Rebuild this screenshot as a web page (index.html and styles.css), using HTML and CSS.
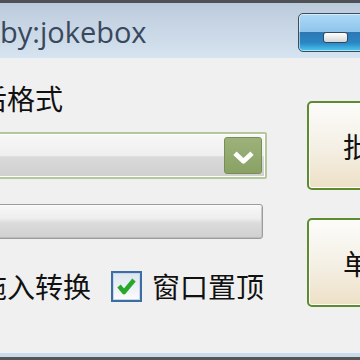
FILE: index.html
```html
<!DOCTYPE html>
<html lang="zh-CN">
<head>
  <meta charset="UTF-8" />
  <meta name="viewport" content="width=device-width, initial-scale=1.0" />
  <title>MP3转换 by:jokebox</title>
  <link rel="stylesheet" href="styles.css">
</head>
<body>
  <div class="window">
    <header class="titlebar">
      <span class="title">by:jokebox</span>
      <div class="min-btn"><span class="min-dash"></span></div>
    </header>

    <main class="client">
      <div class="left">
        <div class="label">后格式</div>
        <div class="combo">
          <div class="combo-btn">
            <svg width="38" height="37" viewBox="0 0 38 37">
              <polyline points="10.5,15 19.5,23.5 28.5,15" fill="none" stroke="#ffffff" stroke-width="5" stroke-linejoin="round" />
            </svg>
          </div>
        </div>
        <div class="progress"></div>
        <div class="options">
          <span class="opt-text">拖入转换</span>
          <span class="checkbox">
            <svg width="27" height="27" viewBox="0 0 27 27">
              <polyline points="6,13 11,19 21,7" fill="none" stroke="#27a82a" stroke-width="4.5" stroke-linejoin="round" />
            </svg>
          </span>
          <span class="opt-text">窗口置顶</span>
        </div>
      </div>

      <div class="right">
        <button class="action">批量</button>
        <button class="action">单个</button>
      </div>
    </main>

    <div class="frame-bottom"></div>
  </div>
</body>
</html>
```

FILE: styles.css
```css
* {
  margin: 0;
  padding: 0;
  box-sizing: border-box;
}

html, body {
  width: 360px;
  height: 360px;
  overflow: hidden;
}

body {
  font-family: "Noto Sans CJK SC", "Noto Sans", sans-serif;
  color: #111111;
}

.window {
  width: 360px;
  height: 360px;
  display: flex;
  flex-direction: column;
  overflow: hidden;
  background: #f0f0f0;
}

.titlebar {
  height: 58px;
  flex-shrink: 0;
  border-top: 3px solid #4e5256;
  background: linear-gradient(#bccbdc, #d6e3f0);
  display: flex;
  align-items: flex-start;
}

.title {
  font-family: "Open Sans", "DejaVu Sans", sans-serif;
  font-size: 29px;
  line-height: 38px;
  margin-top: 10px;
  color: #39485d;
  white-space: nowrap;
}

.min-btn {
  margin-left: auto;
  margin-right: -12px;
  margin-top: 10px;
  width: 74px;
  height: 39px;
  flex-shrink: 0;
  border: 1px solid #3e4c5c;
  border-radius: 5px;
  box-shadow: inset 0 0 0 1px rgba(255, 255, 255, 0.5);
  background: linear-gradient(#acd8f6 0%, #8fc5ec 48%, #2c78b4 50%, #2a86c4 78%, #4ccaf2 100%);
  padding: 18px 0 0 24px;
}

.min-dash {
  display: block;
  width: 25px;
  height: 11px;
  border: 1.5px solid #37465a;
  border-radius: 3px;
  background: linear-gradient(#ffffff, #d4d6d8);
}

.client {
  flex: 1;
  display: flex;
  align-items: flex-start;
}

.left {
  margin-left: -21px;
  width: 288px;
  flex-shrink: 0;
  padding-top: 25px;
}

.label {
  font-size: 28px;
  line-height: 30px;
  white-space: nowrap;
}

.combo {
  margin-top: 19px;
  height: 47px;
  border: 2px solid #b3c99b;
  border-radius: 2px;
  box-shadow: inset 0 0 0 1px #ffffff;
  background: linear-gradient(#f7f7f7 0%, #efefef 50%, #dadada 53%, #cfcfcf 100%);
  display: flex;
  justify-content: flex-end;
  align-items: center;
  padding-right: 3px;
}

.combo-btn {
  width: 38px;
  height: 37px;
  border: 1px solid #778f55;
  border-radius: 3px;
  background: linear-gradient(#9cb27a, #8aa165);
  display: flex;
}

.progress {
  margin-top: 25px;
  margin-right: 4px;
  height: 35px;
  border: 1px solid #9c9c9c;
  border-radius: 3px;
  box-shadow: inset 0 1px 0 #fbfbfb, inset 0 -1px 0 #bdbdbd, inset 1px 0 0 #e8e8e8, inset -1px 0 0 #c8c8c8;
  background: linear-gradient(#f8f8f8 0%, #eeeeee 40%, #dbdbdb 55%, #d0d0d0 100%);
}

.options {
  margin-top: 32px;
  height: 31px;
  display: flex;
  align-items: center;
}

.opt-text {
  font-size: 28px;
  line-height: 31px;
  white-space: nowrap;
}

.checkbox {
  margin: 0 10px 0 20px;
  width: 31px;
  height: 31px;
  flex-shrink: 0;
  border: 2px solid #3c6ea6;
  box-shadow: inset 0 0 0 1px #c9d6e6;
  background: linear-gradient(#dde5ee, #fbfcfd);
  display: flex;
  align-items: center;
  justify-content: center;
}

.right {
  margin-left: 40px;
  padding-top: 43px;
  display: flex;
  flex-direction: column;
  gap: 28px;
  flex-shrink: 0;
}

.action {
  width: 84px;
  height: 89px;
  border: 2px solid #5d8b2e;
  border-radius: 5px;
  box-shadow: inset 0 0 0 1px #ffffff;
  background: linear-gradient(#fcfcfa 0%, #f4efe4 55%, #ede0c6 100%);
  font-family: "Noto Sans CJK SC", "Noto Sans", sans-serif;
  font-size: 28px;
  color: #111111;
  text-align: left;
  padding-left: 34px;
  white-space: nowrap;
  overflow: hidden;
}

.frame-bottom {
  height: 7px;
  flex-shrink: 0;
  border-top: 4px solid #c8daec;
  background: #555555;
}
```
